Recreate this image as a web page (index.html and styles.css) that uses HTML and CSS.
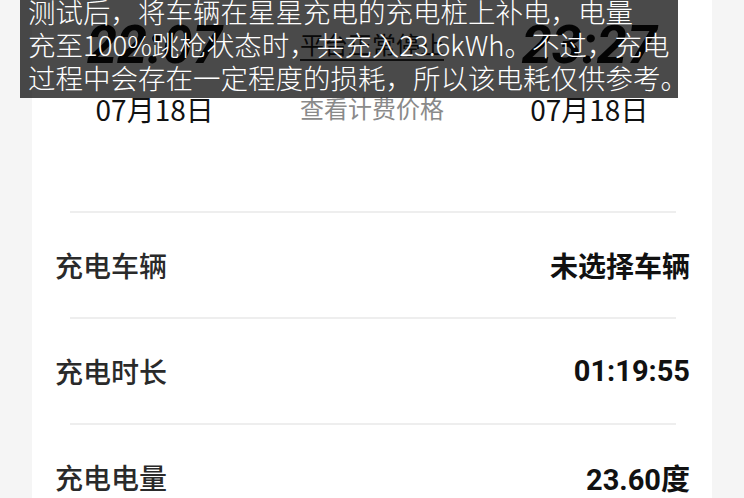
FILE: index.html
```html
<!DOCTYPE html>
<html lang="zh-CN">
<head>
<meta charset="utf-8">
<title>充电详情</title>
<link rel="stylesheet" href="styles.css">
</head>
<body>
<div class="card">
  <div class="top">
    <div class="col">
      <div class="time">22:07</div>
      <div class="date">07月18日</div>
    </div>
    <div class="col">
      <div class="status"><span class="status-text">平台正常停止</span></div>
      <div class="price">查看计费价格</div>
    </div>
    <div class="col">
      <div class="time">23:27</div>
      <div class="date">07月18日</div>
    </div>
  </div>
  <div class="sep"></div>
  <div class="row"><span class="label">充电车辆</span><span class="value">未选择车辆</span></div>
  <div class="sep"></div>
  <div class="row"><span class="label">充电时长</span><span class="value num">01:19:55</span></div>
  <div class="sep"></div>
  <div class="row"><span class="label">充电电量</span><span class="value num">23.60度</span></div>
</div>
<div class="caption">测试后，将车辆在星星充电的充电桩上补电，电量<br>充至100%跳枪状态时，共充入23.6kWh。不过，充电<br>过程中会存在一定程度的损耗，所以该电耗仅供参考。</div>
</body>
</html>
```

FILE: styles.css
```css
html, body {
  margin: 0;
  padding: 0;
}
body {
  background: #f5f5f5;
  width: 744px;
  height: 498px;
  overflow: hidden;
  position: relative;
  font-family: "Noto Sans CJK SC", "Noto Sans", sans-serif;
}
.card {
  margin: 0 32px;
  background: #ffffff;
  height: 498px;
  overflow: hidden;
}
.top {
  display: grid;
  grid-template-columns: 1fr 1fr 1fr;
  padding: 12px 14px 0;
  height: 199px;
}
.col {
  display: flex;
  flex-direction: column;
  align-items: center;
}
.time {
  font-family: "Liberation Sans Narrow", "Roboto", sans-serif;
  font-weight: 700;
  font-style: italic;
  font-size: 54px;
  line-height: 66px;
  color: #111;
}
.date {
  font-size: 28px;
  line-height: 36px;
  margin-top: 13px;
  color: #111;
}
.status {
  height: 66px;
  display: flex;
  align-items: center;
  justify-content: center;
  width: 100%;
}
.status-text {
  font-size: 24px;
  color: #222;
  border-bottom: 2px solid #333;
  line-height: 30px;
}
.price {
  font-size: 24px;
  line-height: 36px;
  margin-top: 12px;
  color: #8a8a8a;
}
.sep {
  height: 2px;
  background: #eeeeee;
  margin: 0 36px 0 38px;
}
.row {
  height: 104px;
  display: flex;
  align-items: center;
  justify-content: space-between;
  padding: 0 22px 0 23px;
}
.label {
  font-size: 28px;
  font-weight: 500;
  color: #2a2a2a;
}
.value {
  font-size: 28px;
  font-weight: 700;
  color: #111;
}
.num {
  font-family: "Roboto", "Noto Sans CJK SC", sans-serif;
  font-size: 29px;
}
.caption {
  position: absolute;
  top: -5px;
  left: 20px;
  width: 658px;
  box-sizing: border-box;
  padding: 0 0 4px 8px;
  background: rgba(0, 0, 0, 0.71);
  color: #ffffff;
  font-size: 27.5px;
  line-height: 33px;
  font-weight: 300;
  white-space: nowrap;
}
```
